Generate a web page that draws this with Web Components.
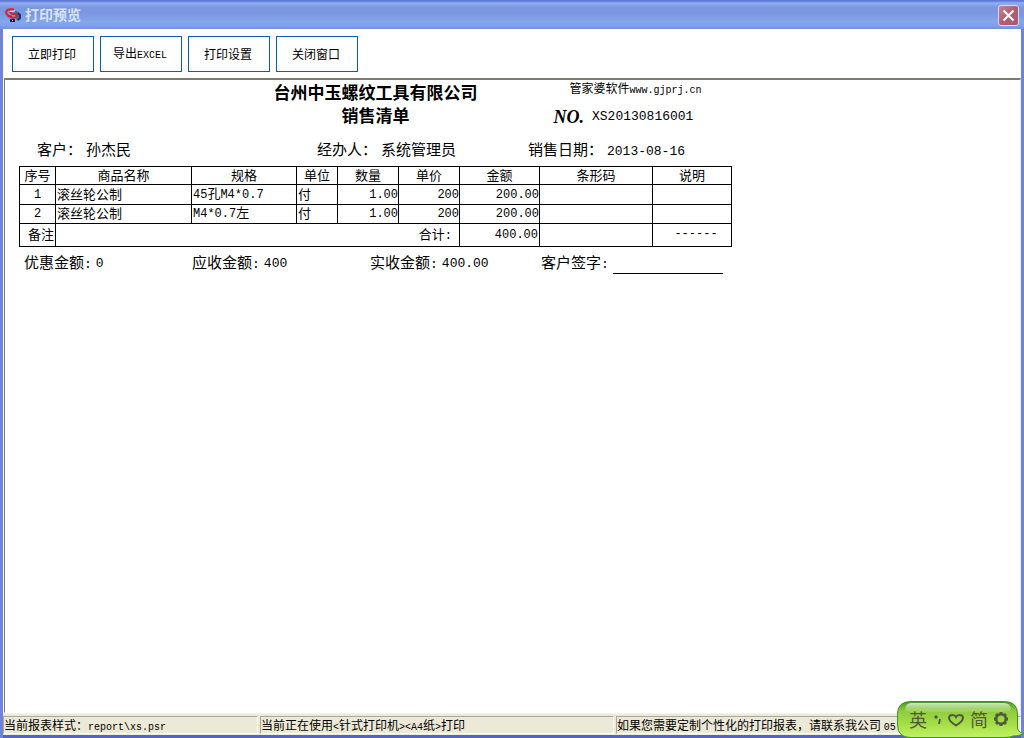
<!DOCTYPE html>
<html lang="zh-CN">
<head>
<meta charset="utf-8">
<title>打印预览</title>
<style>
html, body { margin: 0; height: 100%; }
body { font: 12px/16px "Liberation Mono", "Noto Sans CJK SC", sans-serif; color: #000; overflow: hidden; }
</style>
</head>
<body>
<app-window></app-window>
<script>
const FONT = '"Noto Sans CJK SC", sans-serif';
const LATIN = '"Liberation Mono", monospace';

function define(name, html) {
  const template = document.createElement('template');
  template.innerHTML = html;
  customElements.define(name, class extends HTMLElement {
    constructor() {
      super();
      this.attachShadow({ mode: 'open' }).append(template.content.cloneNode(true));
    }
  });
}

define('title-bar', `
<style>
:host { display: flex; align-items: center; box-sizing: border-box; height: 29px; padding: 2px 5px 0 5px; gap: 4px;
  background: linear-gradient(#6079d6 0, #6079d6 1px, #8fb0f4 3px, #7c97e0 7px, #7b97e0 14px, #83a8ec 22px, #809fe6 26px, #7590da 29px); }
h1 { flex: 1; margin: 0; padding-bottom: 4px; font: bold 14px/20px ${FONT}; color: #d8e4f8; }
button { width: 21px; height: 21px; padding: 0; border: 1px solid #d3dcf4; border-radius: 3px; background: linear-gradient(135deg, #c48496, #b05f72 50%, #a85a70); display: grid; place-items: center; }
svg { display: block; }
</style>
<svg width="16" height="16" viewBox="0 0 16 16" aria-hidden="true">
  <path d="M9 3h3l3 3v5l-3 2-1-3z" fill="#3f6f8c"/>
  <path d="M13 5l2 2v3l-2 2" fill="none" stroke="#27306e" stroke-width="2"/>
  <path d="M9 1.500Q2 .5 1 4Q1 8 7 8.500" fill="none" stroke="#e0202c" stroke-width="2"/>
  <path d="M5 4Q6 6 10 6Q13 7 11 9Q8 11 3 8" fill="none" stroke="#d81e30" stroke-width="2"/>
  <path d="M5 3.500L10 3" stroke="#e8e8f4"/>
  <path d="M5 11h5v3H5z" fill="#222"/>
  <path d="M7 12h1v1H7z" fill="#ccc"/>
</svg>
<h1><slot></slot></h1>
<button type="button" aria-label="关闭">
  <svg width="13" height="13" viewBox="0 0 13 13"><path d="M1.500 1.500l10 10M11.500 1.500l-10 10" stroke="#fff" stroke-width="2"/></svg>
</button>`);

define('tool-button', `
<style>
:host { display: block; }
button { width: 82px; height: 36px; padding: 0 2px 0 0; border: 1px solid #0a5fb4; background: #fff; color: #000; font: 12px/16px ${FONT}; }
::slotted(span) { font: 10px/16px ${LATIN}; }
</style>
<button type="button"><slot></slot></button>`);

define('tool-bar', `
<style>
:host { display: flex; gap: 6px; padding: 7px 9px 6px; background: #fff; }
</style>
<slot></slot>`);

define('sales-report', `
<style>
:host { display: block; width: 713px; font: 15px/20px ${FONT}; }
.n { font-family: ${LATIN}; }
header { display: grid; grid-template-columns: 1fr auto 1fr; column-gap: 76px; height: 56px; }
h1 { grid-column: 2; margin: 0; font: bold 17px/23px ${FONT}; text-align: center; }
.side p { margin: 0; white-space: nowrap; }
.side { display: grid; grid-template-rows: 18px 38px; align-items: center; }
.soft { padding-left: 16px; font-size: 12px; line-height: 18px; }
.soft .n { font-size: 10px; }
.no { display: flex; align-items: center; gap: 8px; }
.no b { font: italic bold 18px/24px "Liberation Serif", serif; }
.no .n { font-size: 13px; }
dl { display: grid; margin: 0; }
dl div { display: flex; align-items: center; }
dt, dd { margin: 0; white-space: nowrap; }
dl .n { font-size: 13px; }
.info { grid-template-columns: 280px 211px 1fr; padding: 3px 0 0 18px; height: 27px; }
.info div { gap: 4px; align-items: baseline; }
.sum { grid-template-columns: 168px 178px 171px 1fr; padding: 5px 0 0 5px; }
.sum div { gap: 4px; }
.line { width: 110px; height: 19px; border-bottom: 1px solid #000; }
table { width: 100%; border-collapse: collapse; table-layout: fixed; font-size: 13px; line-height: 14px; }
th, td { padding: 0 1px 2px; border: 1px solid #000; font-weight: normal; white-space: nowrap; text-align: left; }
th, .c { text-align: center; }
.r { text-align: right; padding-right: 0; }
td.n, td .n { font-size: 12px; }
td.n { padding-bottom: 0; }
tr { height: 19px; }
thead tr { height: 18px; }
tbody tr:first-child { height: 20px; }
tfoot tr { height: 23px; }
tfoot td.r { padding-right: 1px; }
tfoot td.total { padding: 0 7px 0 0; }
tfoot td.dash { padding: 0 0 2px 8px; }
</style>
<header>
  <h1>台州中玉螺纹工具有限公司<br>销售清单</h1>
  <div class="side">
    <p class="soft">管家婆软件<span class="n">www.gjprj.cn</span></p>
    <p class="no"><b>NO.</b><span class="n">XS20130816001</span></p>
  </div>
</header>
<dl class="info">
  <div><dt>客户：</dt><dd>孙杰民</dd></div>
  <div><dt>经办人：</dt><dd>系统管理员</dd></div>
  <div><dt>销售日期：</dt><dd class="n">2013-08-16</dd></div>
</dl>
<table>
  <colgroup><col style="width:36px"><col style="width:136px"><col style="width:105px"><col style="width:41px"><col style="width:61px"><col style="width:61px"><col style="width:80px"><col style="width:113px"><col style="width:79px"></colgroup>
  <thead><tr><th>序号</th><th>商品名称</th><th>规格</th><th>单位</th><th>数量</th><th>单价</th><th>金额</th><th>条形码</th><th>说明</th></tr></thead>
  <tbody>
    <tr><td class="c n">1</td><td>滚丝轮公制</td><td><span class="n">45</span>孔<span class="n">M4*0.7</span></td><td>付</td><td class="r n">1.00</td><td class="r n">200</td><td class="r n">200.00</td><td></td><td></td></tr>
    <tr><td class="c n">2</td><td>滚丝轮公制</td><td><span class="n">M4*0.7</span>左</td><td>付</td><td class="r n">1.00</td><td class="r n">200</td><td class="r n">200.00</td><td></td><td></td></tr>
  </tbody>
  <tfoot><tr><td class="r">备注</td><td colspan="5" class="r total">合计<span class="n">:</span></td><td class="r n">400.00</td><td></td><td class="c n dash">------</td></tr></tfoot>
</table>
<dl class="sum">
  <div><dt>优惠金额<span class="n">:</span></dt><dd class="n">0</dd></div>
  <div><dt>应收金额<span class="n">:</span></dt><dd class="n">400</dd></div>
  <div><dt>实收金额<span class="n">:</span></dt><dd class="n">400.00</dd></div>
  <div><dt>客户签字<span class="n">:</span></dt><dd class="line"></dd></div>
</dl>`);

define('status-bar', `
<style>
:host { display: grid; grid-template-columns: 255px 354px 1fr; gap: 2px; padding: 2px 0 1px; background: #ece9d8; border-top: 1px solid #f6f4ec; }
</style>
<slot></slot>`);

define('status-panel', `
<style>
:host { display: block; min-width: 0; box-sizing: border-box; height: 18px; overflow: hidden; white-space: nowrap; border: 1px solid; border-color: #aca899 #fff #fff #aca899; font: 12px/16px ${FONT}; }
::slotted(span) { font: 10px/16px ${LATIN}; }
</style>
<slot></slot>`);

define('ime-bar', `
<style>
:host { position: absolute; right: 0; bottom: 0; display: block; width: 127px; height: 38px; }
.skin { position: absolute; inset: 0; }
.keys { position: relative; display: flex; align-items: center; height: 38px; padding-left: 12px; gap: 5px; }
button { padding: 0; border: 0; background: none; color: #50593f; font: 18px/24px ${FONT}; display: grid; place-items: center; }
</style>
<svg class="skin" width="127" height="38" viewBox="0 0 127 38" aria-hidden="true">
  <defs>
    <linearGradient id="g" x1="0" y1="0" x2="0" y2="1"><stop offset="0" stop-color="#3f9a1c"/><stop offset=".25" stop-color="#8ecb3e"/><stop offset=".6" stop-color="#a3dc45"/><stop offset="1" stop-color="#c2f264"/></linearGradient>
    <linearGradient id="s" x1="0" y1="0" x2="0" y2="1"><stop offset="0" stop-color="#d3e8c4"/><stop offset="1" stop-color="#b0dc72" stop-opacity=".4"/></linearGradient>
  </defs>
  <path d="M14 1.500H107Q120.500 1.500 120.500 14V28Q121 32 126.500 33.500Q122 36.500 116 36Q113 37.500 107 37.500H14Q.5 37.500 .5 25V14Q.5 1.500 14 1.500Z" fill="url(#g)" stroke="#3e9422"/>
  <path d="M14 3H107Q113 3 114 9Q112 12 106 12H15Q9 12 8 9Q9 3 14 3Z" fill="url(#s)"/>
</svg>
<div class="keys">
  <button type="button">英</button>
  <button type="button" aria-label="标点"><svg width="10" height="16" viewBox="0 0 10 16"><circle cx="4" cy="6" r="1.700" fill="#50593f"/><path d="M8 8l-1 5" stroke="#50593f" stroke-width="1.800"/></svg></button>
  <button type="button" aria-label="皮肤"><svg width="18" height="16" viewBox="0 0 18 16"><path d="M9 14.500Q2 10 2 7Q2 4 5.500 4Q8 4 9 6Q10 4 12.500 4Q16 4 16 7Q16 10 9 14.500Z" fill="none" stroke="#50593f" stroke-width="2"/></svg></button>
  <button type="button">简</button>
  <button type="button" aria-label="设置"><svg width="16" height="16" viewBox="0 0 16 16"><circle cx="8" cy="8" r="4.800" fill="none" stroke="#50593f" stroke-width="2.600"/><path d="M8 1v2M8 13v2M1 8h2M13 8h2M3 3l1.500 1.500M11.500 11.500L13 13M13 3l-1.500 1.500M4.500 11.500L3 13" stroke="#50593f" stroke-width="3"/></svg></button>
</div>`);

define('app-window', `
<style>
:host { position: relative; display: flex; flex-direction: column; box-sizing: border-box; height: 100vh; background: #6d83dc; }
.client { flex: 1; min-height: 0; display: flex; flex-direction: column; margin: 0 3px; border-bottom: 3px solid #5862c4; background: #fff; }
main { flex: 1; min-height: 0; margin-left: 1px; padding: 0 0 0 14px; overflow: hidden; border: 1px solid #807c6c; border-right-color: #ece9d8; border-bottom-color: #fff; border-top-width: 2px; }
</style>
<title-bar>打印预览</title-bar>
<div class="client">
  <tool-bar>
    <tool-button>立即打印</tool-button>
    <tool-button>导出<span>EXCEL</span></tool-button>
    <tool-button>打印设置</tool-button>
    <tool-button>关闭窗口</tool-button>
  </tool-bar>
  <main><sales-report></sales-report></main>
  <status-bar>
    <status-panel>当前报表样式：<span>report\\xs.psr</span></status-panel>
    <status-panel>当前正在使用<span>&lt;</span>针式打印机<span>&gt;&lt;A4</span>纸<span>&gt;</span>打印</status-panel>
    <status-panel>如果您需要定制个性化的打印报表，请联系我公司 <span>05</span></status-panel>
  </status-bar>
</div>
<ime-bar></ime-bar>`);
</script>
</body>
</html>
